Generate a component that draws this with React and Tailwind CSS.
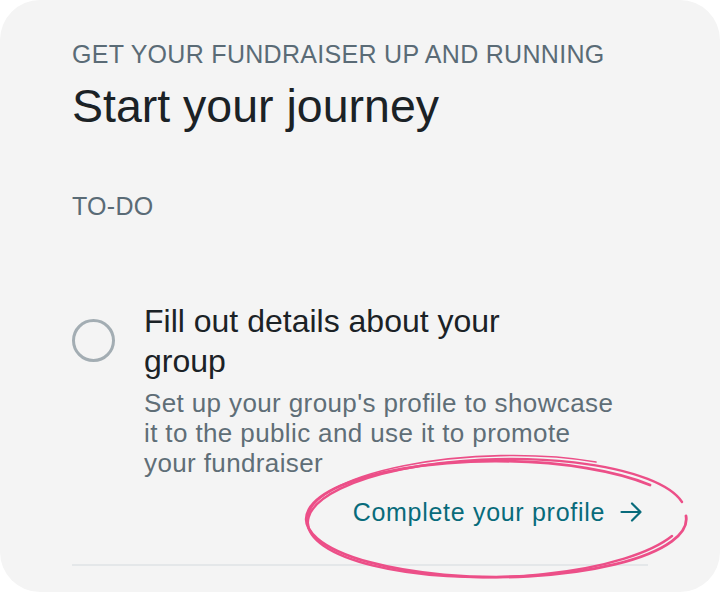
import React from "react";

const font = { fontFamily: '"Liberation Sans", Arial, sans-serif' };

// hand drawn loop around the call to action
const Scribble = () => (
    <svg
        className="absolute pointer-events-none"
        style={{ left: 296, top: 450 }}
        width="400"
        height="132"
        viewBox="0 0 400 132"
        fill="none"
    >
        <path
            d="M354 35 A190 58 0 1 0 390 66"
            stroke="#ec4f88"
            strokeWidth="2.8"
            strokeLinecap="round"
        />
        <path
            d="M386 52 A189 59 -1.5 1 0 376 86"
            stroke="#ec4f88"
            strokeWidth="2.4"
            strokeLinecap="round"
        />
        <path
            d="M300 12 A186 57 -2 0 0 12 70"
            stroke="#ec4f88"
            strokeWidth="1.6"
            strokeLinecap="round"
        />
    </svg>
);

const App = () => {
    return (
        <div className="w-[720px] h-[592px] bg-white" style={font}>
            <div className="relative w-full h-full bg-[#f4f4f4] rounded-[40px] pt-[39px] px-[72px] overflow-hidden">
                <p className="text-[25px] leading-[30px] text-[#5a6b76] tracking-[0.3px]">
                    GET YOUR FUNDRAISER UP AND RUNNING
                </p>
                <h1 className="mt-[9px] text-[46.5px] leading-[56px] text-[#1b2226]">
                    Start your journey
                </h1>
                <p className="mt-[57px] text-[25px] leading-[30px] text-[#5a6b76] tracking-[0.3px]">TO-DO</p>

                <div className="mt-[80px] flex">
                    <div className="w-[72px] shrink-0 pt-[18px]">
                        <div className="w-[43px] h-[43px] rounded-full border-[3px] border-[#a3adb3]"></div>
                    </div>
                    <div className="flex-1">
                        <h2 className="text-[32px] leading-[40px] text-[#1b2226]">
                            Fill out details about your
                            <br />
                            group
                        </h2>
                        <p className="mt-[7px] max-w-[485px] text-[26px] leading-[30px] text-[#5f6e77] tracking-[0.38px]">
                            Set up your group's profile to showcase it to the public and use it to promote your fundraiser
                        </p>
                        <div className="mt-[19px] flex justify-end pr-[6px]">
                            <a className="flex items-center gap-[15px] text-[25px] leading-[30px] text-[#086b7b] tracking-[0.7px]">
                                Complete your profile
                                <svg width="22" height="22" viewBox="0 0 22 22" fill="none" stroke="#086b7b" strokeWidth="2.2" strokeLinecap="round" strokeLinejoin="round">
                                    <path d="M1.5 11h19M12 2.5l8.5 8.5-8.5 8.5" />
                                </svg>
                            </a>
                        </div>
                    </div>
                </div>
                <div className="mt-[37px] h-[2px] bg-[#e4e7e9]"></div>
                <Scribble />
            </div>
        </div>
    );
};

export default App;
